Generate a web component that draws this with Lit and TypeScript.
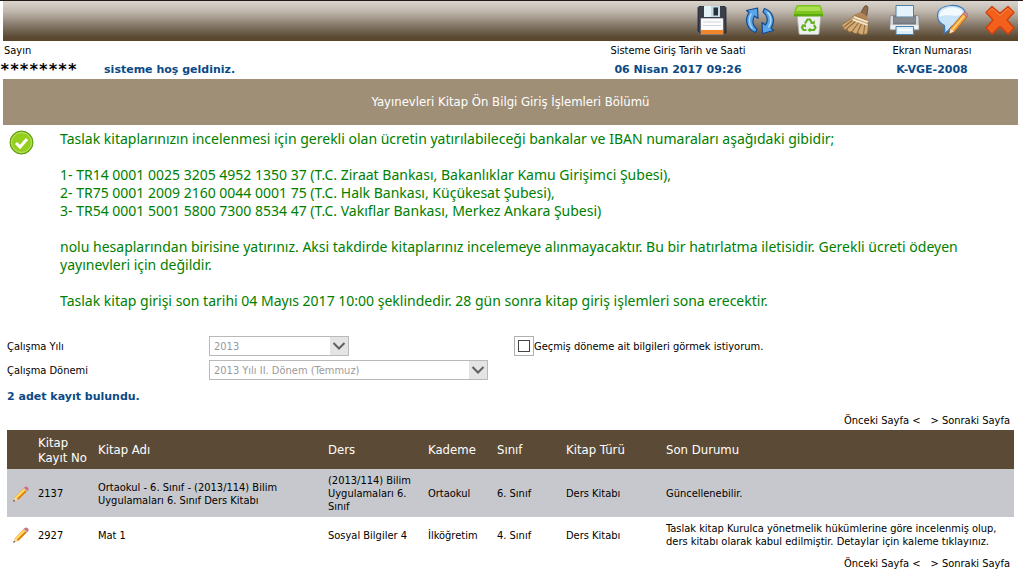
import { LitElement, html, svg, css } from "lit";
import { customElement, state } from "lit/decorators.js";

interface Book {
  no: string;
  title: string;
  lesson: string;
  level: string;
  grade: string;
  kind: string;
  status: string;
}

const BOOKS: Book[] = [
  {
    no: "2137",
    title: "Ortaokul - 6. Sınıf - (2013/114) Bilim Uygulamaları 6. Sınıf Ders Kitabı",
    lesson: "(2013/114) Bilim Uygulamaları 6. Sınıf",
    level: "Ortaokul",
    grade: "6. Sınıf",
    kind: "Ders Kitabı",
    status: "Güncellenebilir.",
  },
  {
    no: "2927",
    title: "Mat 1",
    lesson: "Sosyal Bilgiler 4",
    level: "İlköğretim",
    grade: "4. Sınıf",
    kind: "Ders Kitabı",
    status:
      "Taslak kitap Kurulca yönetmelik hükümlerine göre incelenmiş olup, ders kitabı olarak kabul edilmiştir. Detaylar için kaleme tıklayınız.",
  },
];

const TOOLS = [
  {
    label: "Kaydet",
    icon: svg`
      <path d="M3 3.5h26l1 1V30H4l-2-2V4.500z" fill="#3a3f4c" stroke="#23252e" stroke-width=".8"/>
      <path d="M8 3h16v11H8z" fill="#c3dce6"/>
      <path d="M8 3h7v11H8z" fill="#e3f3f6"/>
      <path d="M17.500 4.500h4.500v8h-4.500z" fill="#2b2f38"/>
      <path d="M5 15.500h22V31H5z" fill="#fdfdfd" stroke="#d9dde2" stroke-width=".6"/>
      <path d="M5 27h22v4H5z" fill="#f0852a"/>
      <path d="M7 19h18M7 22.500h18" stroke="#cfd4da"/>`,
  },
  {
    label: "Yenile",
    icon: svg`
      <path d="M11.500 29.500C3 26.500 0 17 5 9.500L2.500 7.500 13.500 5 14 15.500 10.500 13C7.500 17.500 8.500 23 13 26z" fill="#5aa5ea" stroke="#124a92" stroke-width="1.200" stroke-linejoin="round"/>
      <path d="M20.500 5.500C29 8.500 32 18 27 25L29.500 27.500 18.500 30.500 18 19.500 21.500 22C24.500 17.500 23.500 12 19 9z" fill="#5aa5ea" stroke="#124a92" stroke-width="1.200" stroke-linejoin="round"/>
      <path d="M8.500 25.500C4.500 21 4.500 15 7.500 10.500M23.500 9C27.500 13.500 27.500 19.500 24.500 24.500" fill="none" stroke="#b5dbfb" stroke-width="1.300"/>`,
  },
  {
    label: "Sil",
    icon: svg`
      <path d="M5 12h24l-2 18.500q-.2 1-1.200 1H8.200q-1 0-1.200-1z" fill="#eef0ef" stroke="#a5aca7" stroke-width=".8"/>
      <path d="M4 3.500q0-1.500 1.500-1.500h22q1.500 0 1.500 1.500l2 6V13H2V9.500z" fill="#7cc51c"/>
      <path d="M5.500 3.500h22l1.500 4.500h-25z" fill="#a8de4f"/>
      <path d="M2 11h29v2.500H2z" fill="#5ba70f"/>
      <g fill="none" stroke="#61b123" stroke-width="2.200"><path d="M13 20.500l2.500-4h2.500l2 3.500M22 22l1.500 2.500-1.500 2.500h-4.500M14.500 27h-3L10 24.500l1.500-2.500"/></g>
      <path d="M18 20.500l4.500 1 .5-4zM18.500 24.500v5L15.500 27zM9 22l4.500-1 .8 3.800z" fill="#61b123"/>`,
  },
  {
    label: "Temizle",
    icon: svg`
      <path d="M20.500 10.500L24 4q1-1.800 2.700-1.200t1.200 2.700L26.500 14z" fill="#8c6b4d" stroke="#593f29" stroke-width=".8"/>
      <path d="M15 11.500l5.500-2.500 7 4.500v5.500L14 15z" fill="#b2875a"/>
      <path d="M14.500 12C10 17 6 19 1.500 22L3.500 24.500l1 2.500 3-.5 1 2.500 4-.5 2 2 4-.5 2 1.500 6.500-.5c1.500-5 1.500-9 .5-13z" fill="#d3ab74" stroke="#8f6a3d" stroke-width=".8"/>
      <path d="M17 17L6 26.500M19.500 18.500L12 28.500M22 19.500L17 30.500M25 20.500L23.500 31M14 16L4 24" stroke="#8f6a3d" stroke-width="1.100" fill="none"/>
      <path d="M14 14l14 5M12.500 16.500l15 5.500" stroke="#f5ead6" stroke-width="1.700" fill="none"/>`,
  },
  {
    label: "Yazdır",
    icon: svg`
      <path d="M2 14q0-1.500 1.500-1.500h26q1.500 0 1.500 1.500v13H2z" fill="#d4d6da" stroke="#82868c" stroke-width=".8"/>
      <path d="M5 12.500h23v9H5z" fill="#777b80"/>
      <path d="M8 2.500h17.500V14H8z" fill="#e5f2fb" stroke="#4d82a9"/>
      <path d="M5.500 14h22v5.500h-22z" fill="#85898d"/>
      <path d="M2.500 22h28v4h-28z" fill="#eceef0"/>
      <path d="M8 23.500h17.500v8H8z" fill="#dceffa" stroke="#4d82a9"/>
      <path d="M10 27h13.500" stroke="#fff" stroke-width="1.500"/>`,
  },
  {
    label: "Görüş yaz",
    icon: svg`
      <path d="M15 2.500C23 2 29.500 5.500 29.500 11.500 29.500 18 24 22.500 16 23c-2 3-4.500 5.500-8 7.500 1-3 1-5.500.5-8C4 20.500 1.500 17 1.500 12.500 1.500 6.500 7 3 15 2.500z" fill="#c9e3f8" stroke="#3e79b4" stroke-width="1.200"/>
      <path d="M15 4.500C21 4 27 6.500 27.500 11 21 15 11 10 3.500 14 3 8.500 8 5 15 4.500z" fill="#f3fafe"/>
      <path d="M27 10.500l4 3.500L18.500 28.500l-5 2 1-5.500z" fill="#f49d2e" stroke="#b0651a" stroke-width=".8"/>
      <path d="M28.500 12.500L16.500 26.500" stroke="#ffdc92" stroke-width="1.300"/>
      <path d="M27 10.500l1-1.300q1-.8 2.500.5t1.300 2.500L31 14z" fill="#d98a98" stroke="#9a5d6e" stroke-width=".6"/>
      <path d="M14.500 25.500l3.500 3-4.500 2z" fill="#f4dfc0"/>`,
  },
  {
    label: "Kapat",
    icon: svg`
      <path d="M8 3.500L16 10.500 24 3.500 30 9.500 23 17 30 25 24 31 16 23.500 8 31 2 25 9 17 2 9.500z" fill="#f2601c" stroke="#d1400b" stroke-width="1.400" stroke-linejoin="round"/>
      <path d="M4 9.500L8 5.500 16 12.500 24 5.500 28 9.500" fill="none" stroke="#ff8748" stroke-width="1"/>`,
  },
];

const chevron = html`<svg class="chevron" viewBox="0 0 18 18" aria-hidden="true">
  <path d="M3.500 6L9 11.500 14.500 6" fill="none" stroke="#606060" stroke-width="2" />
</svg>`;

const pencil = html`<svg class="pencil" viewBox="0 0 16 16" aria-hidden="true">
  <path d="M11 1.500l3.500 3.500L5 14l-4.500 1.500L2 11z" fill="#f9a825" />
  <path d="M11.300 2.500l1.200 1.200L3.500 12.500l-1.200-1.200z" fill="#ffe173" />
  <path d="M13.500 5.500L5 14l-1-1 8.500-8.500z" fill="#d9780f" />
  <path d="M2 11l3 3-4.500 1.500z" fill="#f4dcb8" />
  <path d="M1 13.800l1.200 1.200L.2 15.800z" fill="#333" />
  <path d="M10.300 2.200l3.500 3.500 1-1-3.500-3.500z" fill="#bfc3cc" />
  <path d="M11.500 1.200q1.500-1.500 3.200 0t.3 3.300l-.6.500L11 1.700z" fill="#cf6f80" />
</svg>`;

@customElement("app-root")
export class AppRoot extends LitElement {
  @state() private showPast = false;

  static styles = css`
    :host {
      display: block;
      box-sizing: border-box;
      padding: 0 5px 0 3px;
      border-top: 1px solid #231a16;
      background: #fff;
      color: #000;
      font-family: "DejaVu Sans Condensed", "Noto Sans", sans-serif;
      font-size: 11px;
      line-height: 13px;
    }
    .toolbar {
      display: flex;
      justify-content: flex-end;
      gap: 16px;
      height: 40px;
      padding: 2px 2px 0 0;
      box-sizing: border-box;
      background: linear-gradient(#d9d4ce, #c1b9af 25%, #877a6b 60%, #5b4a34 90%, #5b4529);
    }
    .tool,
    .edit {
      padding: 0;
      border: 0;
      background: none;
      cursor: pointer;
    }
    .tool {
      width: 32px;
      height: 32px;
    }
    .tool svg {
      display: block;
      width: 32px;
      height: 32px;
    }
    .session {
      display: grid;
      grid-template-columns: 1fr 160px 172px;
      column-gap: 88px;
      padding: 3px 0 3px 1px;
    }
    .strong {
      font-family: "DejaVu Sans", sans-serif;
      font-weight: bold;
      color: #0b4a86;
    }
    .greeting {
      display: flex;
      gap: 27px;
      margin-top: 6px;
    }
    .mask {
      margin-left: -4px;
      font-family: "DejaVu Sans Mono", monospace;
      font-size: 16px;
      color: #000;
    }
    .info {
      display: grid;
      gap: 6px;
      align-content: start;
      justify-items: center;
    }
    .title {
      margin: 0;
      padding: 15px 0;
      background: #a08f77;
      color: #fff;
      font-size: 13px;
      font-weight: normal;
      line-height: 16px;
      text-align: center;
    }
    .notice {
      display: flex;
      gap: 26px;
      padding: 5px 40px 0 6px;
      color: #008000;
      font-family: "Noto Sans", sans-serif;
      font-size: 14px;
      line-height: 18px;
    }
    .notice p {
      margin: 0 0 18px;
    }
    .ok {
      flex: none;
      width: 25px;
      height: 25px;
    }
    .form {
      display: grid;
      grid-template-columns: 202px 305px 1fr;
      row-gap: 4px;
      align-items: center;
      padding: 8px 4px 0;
    }
    .select {
      display: grid;
      justify-self: start;
      grid-template-columns: 1fr 18px;
      height: 20px;
      box-sizing: border-box;
      border: 1px solid #b9b9b9;
    }
    .year {
      width: 140px;
    }
    .term {
      width: 279px;
    }
    .select select {
      grid-area: 1 / 1 / 2 / 3;
      appearance: none;
      margin: 0;
      padding: 0 4px;
      border: 0;
      border-radius: 0;
      background: #fff;
      color: #9a9a9a;
      font: inherit;
      opacity: 1;
    }
    .chevron {
      grid-area: 1 / 2;
      width: 18px;
      height: 18px;
      z-index: 1;
      background: #e4e4e4;
      pointer-events: none;
    }
    .past {
      display: flex;
      align-items: center;
    }
    .box {
      display: grid;
      place-items: center;
      width: 18px;
      height: 18px;
      border: 1px solid #b0b0b0;
    }
    .box input {
      appearance: none;
      width: 12px;
      height: 12px;
      margin: 0;
      border: 1px solid #444;
      background: #fff;
    }
    .box input:checked {
      background: #444;
    }
    .count {
      margin: 10px 4px;
    }
    .pager {
      display: flex;
      justify-content: flex-end;
      gap: 10px;
      padding: 1px 8px 3px;
    }
    .pager a {
      color: inherit;
      text-decoration: none;
    }
    .grid {
      margin: 0 4px 4px;
    }
    table {
      width: 100%;
      table-layout: fixed;
      border-collapse: collapse;
    }
    th {
      height: 37px;
      padding: 1px 2px;
      background: #5b4a35;
      color: #fff;
      font-size: 13px;
      font-weight: normal;
      line-height: 15px;
      text-align: left;
    }
    td {
      height: 26px;
      padding: 5px 2px 4px;
    }
    tbody tr:nth-child(odd) {
      background: #c7c8cd;
    }
    .c-edit {
      width: 25px;
    }
    .c-no {
      width: 56px;
    }
    .c-title {
      width: 226px;
    }
    .c-mid {
      width: 96px;
    }
    .c-small {
      width: 65px;
    }
    td.c-edit {
      padding-left: 6px;
      width: 21px;
    }
    .edit,
    .pencil {
      display: block;
      width: 16px;
      height: 16px;
    }
  `;

  private pager() {
    return html`<nav class="pager" aria-label="Sayfalar">
      <a href="#onceki">Önceki Sayfa &lt;</a><a href="#sonraki">&gt; Sonraki Sayfa</a>
    </nav>`;
  }

  render() {
    return html`
      <div class="toolbar" role="toolbar">
        ${TOOLS.map(
          (t) => html`<button class="tool" type="button" aria-label=${t.label}>
            <svg viewBox="0 0 32 32" aria-hidden="true">${t.icon}</svg>
          </button>`
        )}
      </div>
      <header class="session">
        <div class="user">
          <div>Sayın</div>
          <div class="greeting strong">
            <span class="mask">********</span><span>sisteme hoş geldiniz.</span>
          </div>
        </div>
        <div class="info">
          <span>Sisteme Giriş Tarih ve Saati</span>
          <span class="strong">06 Nisan 2017 09:26</span>
        </div>
        <div class="info">
          <span>Ekran Numarası</span>
          <span class="strong">K-VGE-2008</span>
        </div>
      </header>
      <h1 class="title">Yayınevleri Kitap Ön Bilgi Giriş İşlemleri Bölümü</h1>
      <section class="notice">
        <svg class="ok" viewBox="0 0 25 25" aria-hidden="true">
          <circle cx="12.500" cy="12.500" r="11.500" fill="#7fba0e" stroke="#5d9a10" />
          <circle cx="12.500" cy="12.500" r="10" fill="#93cf1c" stroke="#c5e77b" />
          <path d="M7 13l4 4 7-8" fill="none" stroke="#fff" stroke-width="3" />
        </svg>
        <div>
          <p>Taslak kitaplarınızın incelenmesi için gerekli olan ücretin yatırılabileceği bankalar ve IBAN numaraları aşağıdaki gibidir;</p>
          <p>
            1- TR14 0001 0025 3205 4952 1350 37 (T.C. Ziraat Bankası, Bakanlıklar Kamu Girişimci Şubesi),<br />
            2- TR75 0001 2009 2160 0044 0001 75 (T.C. Halk Bankası, Küçükesat Şubesi),<br />
            3- TR54 0001 5001 5800 7300 8534 47 (T.C. Vakıflar Bankası, Merkez Ankara Şubesi)
          </p>
          <p>nolu hesaplarından birisine yatırınız. Aksi takdirde kitaplarınız incelemeye alınmayacaktır. Bu bir hatırlatma iletisidir. Gerekli ücreti ödeyen yayınevleri için değildir.</p>
          <p>Taslak kitap girişi son tarihi 04 Mayıs 2017 10:00 şeklindedir. 28 gün sonra kitap giriş işlemleri sona erecektir.</p>
        </div>
      </section>
      <form class="form">
        <label for="year">Çalışma Yılı</label>
        <div class="select year">
          <select id="year" disabled><option>2013</option></select>${chevron}
        </div>
        <label class="past">
          <span class="box"><input
            type="checkbox"
            .checked=${this.showPast}
            @change=${(e: Event) => (this.showPast = (e.target as HTMLInputElement).checked)}
          /></span>
          <span>Geçmiş döneme ait bilgileri görmek istiyorum.</span>
        </label>
        <label for="term">Çalışma Dönemi</label>
        <div class="select term">
          <select id="term" disabled><option>2013 Yılı II. Dönem (Temmuz)</option></select>${chevron}
        </div>
      </form>
      <p class="count strong">2 adet kayıt bulundu.</p>
      ${this.pager()}
      <div class="grid">
        <table>
          <thead>
            <tr>
              <th class="c-edit"></th>
              <th class="c-no">Kitap Kayıt No</th>
              <th class="c-title">Kitap Adı</th>
              <th class="c-mid">Ders</th>
              <th class="c-small">Kademe</th>
              <th class="c-small">Sınıf</th>
              <th class="c-mid">Kitap Türü</th>
              <th>Son Durumu</th>
            </tr>
          </thead>
          <tbody>
            ${BOOKS.map(
              (b) => html`<tr>
                <td class="c-edit">
                  <button class="edit" type="button" aria-label="${b.no} düzenle">${pencil}</button>
                </td>
                <td>${b.no}</td>
                <td>${b.title}</td>
                <td>${b.lesson}</td>
                <td>${b.level}</td>
                <td>${b.grade}</td>
                <td>${b.kind}</td>
                <td>${b.status}</td>
              </tr>`
            )}
          </tbody>
        </table>
      </div>
      ${this.pager()}
    `;
  }
}
